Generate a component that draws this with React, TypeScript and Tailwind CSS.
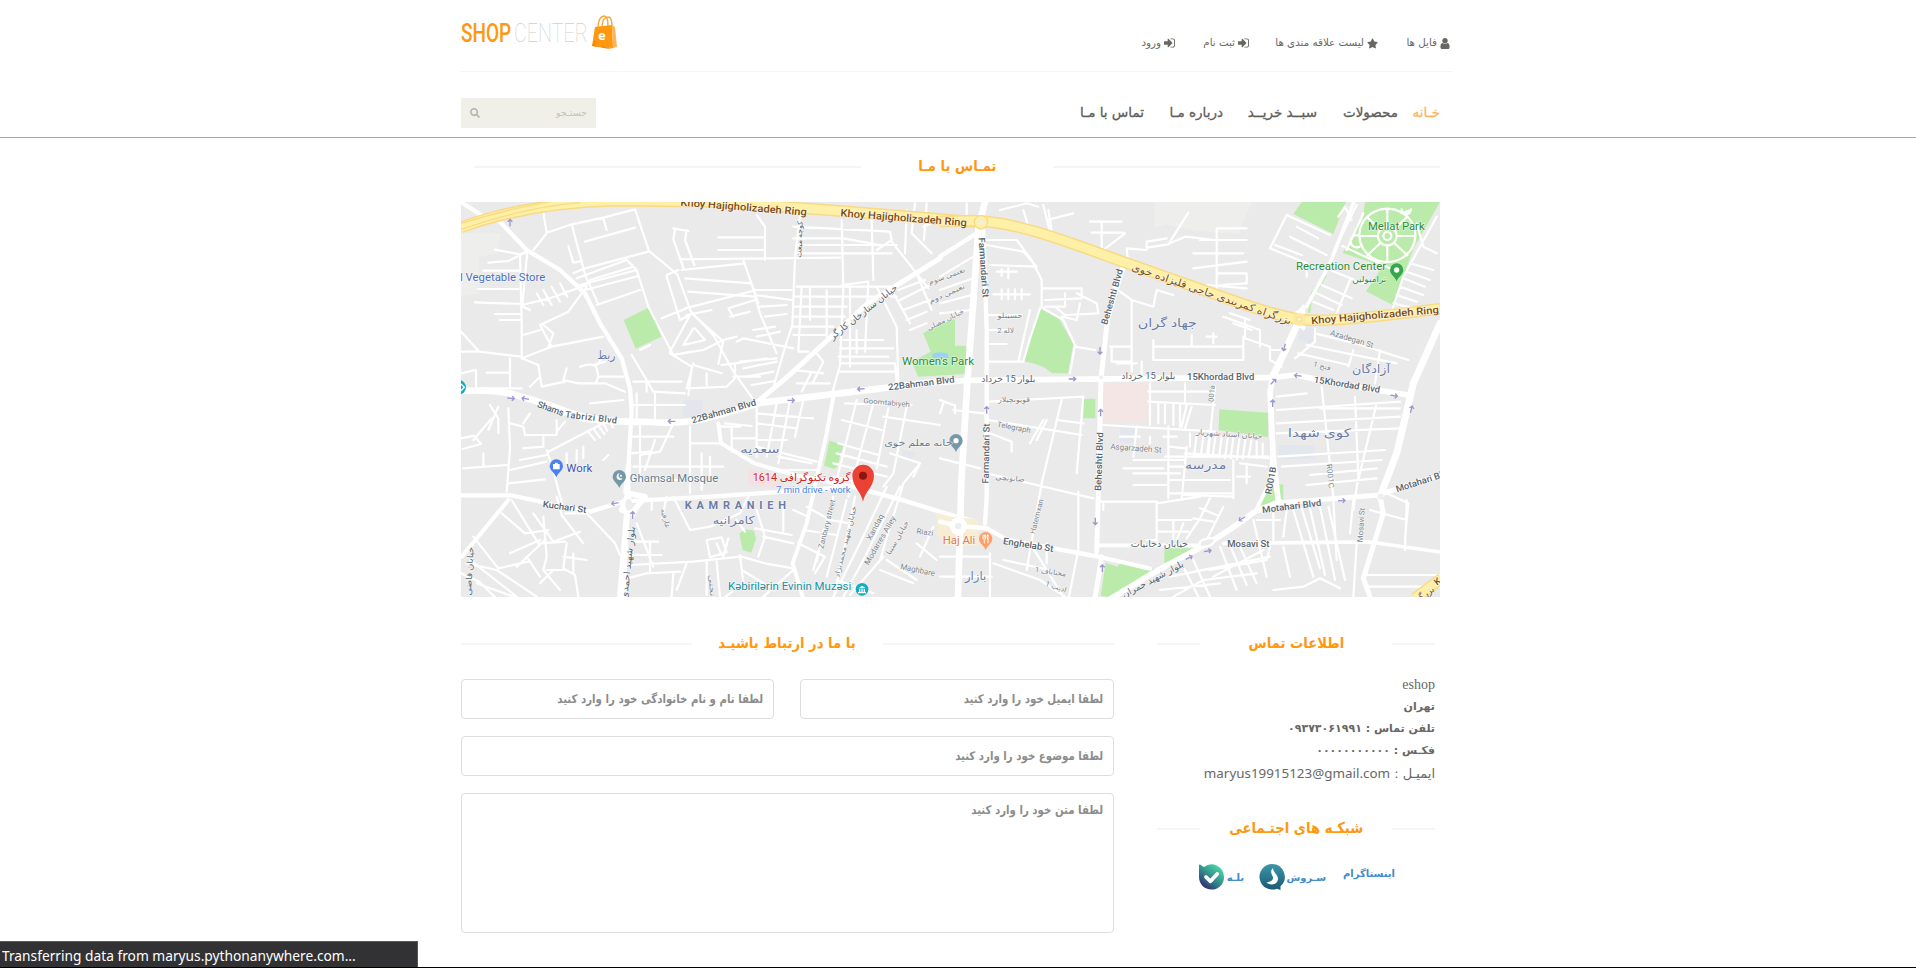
import type { ReactNode } from "react";
import { FaSearch, FaStar } from "react-icons/fa";

const UserIcon = () => (
  <svg viewBox="256 128 1280 1536" className="h-[11px] w-[10px] shrink-0" fill="currentColor">
    <path d="M1536 1399q0 109-62.5 187t-150.5 78H469q-88 0-150.5-78T256 1399q0-85 8.5-160.5t31.5-152 58.5-131 94-89T583 832q131 128 313 128t313-128q76 0 134.5 34.5t94 89 58.5 131 31.5 152 8.5 160.5zm-256-887q0 159-112.5 271.5T896 896 624.5 783.5 512 512t112.5-271.5T896 128t271.5 112.5T1280 512z" />
  </svg>
);

const SignInIcon = () => (
  <svg viewBox="128 256 1536 1280" className="h-[10px] w-[11px] shrink-0" fill="currentColor">
    <path d="M1312 896q0 26-19 45l-544 544q-19 19-45 19t-45-19-19-45v-288H192q-26 0-45-19t-19-45V704q0-26 19-45t45-19h448V352q0-26 19-45t45-19 45 19l544 544q19 19 19 45zm352-352v704q0 119-84.5 203.5T1376 1536h-320q-13 0-22.5-9.5T1024 1504q0-4-1-20t-.5-26.5 3-23.5 10-19.5 20.5-6.5h320q66 0 113-47t47-113V544q0-66-47-113t-113-47h-312l-11.5-1-11.5-3-8-5.5-7-9-2-13.5q0-4-1-20t-.5-26.5 3-23.5 10-19.5 20.5-6.5h320q119 0 203.5 84.5T1664 544z" />
  </svg>
);

const BagIcon = () => (
  <svg viewBox="0 0 26 34" className="h-[34px] w-[26px] shrink-0">
    <path d="M6 12C6 5 9 1 12 1s4 3 4 10M10 12c0-7 3-10 6-10s4 3 4 9" fill="none" stroke="#fba33c" strokeWidth="1.4" />
    <path d="M3 12 20 10l1 23L0 31z" fill="#fe980f" />
    <path d="M20 10l3 2 2 20-4 1z" fill="#fdb45e" />
    <path d="M0 31l3-7 1 7 18 2-6 .8z" fill="#f58a07" />
    <text x="10" y="25" textAnchor="middle" fontSize="12.500" fontWeight="700" fill="#fff" fontFamily="Open Sans, sans-serif">e</text>
  </svg>
);

const SoroushIcon = () => (
  <svg viewBox="0 0 26 26" className="h-[26px] w-[26px] shrink-0">
    <defs>
      <linearGradient id="soroush" x1="0" y1="0" x2="0" y2="1">
        <stop offset="0" stopColor="#3b97ab" />
        <stop offset="1" stopColor="#1b5873" />
      </linearGradient>
    </defs>
    <path d="M13 0a12.800 12.800 0 1 0 5 24.700L21.500 26v-3.700A12.800 12.800 0 0 0 13 0z" fill="url(#soroush)" />
    <path d="M14 4c-2 2-2.500 4-1 7 2 3.500 1.500 6-5.500 7.500 3 2.800 8.500 2.500 10.500-.5 2.200-3.500.5-6-1.500-8.500-1.300-1.700-2.200-3-2.500-5.500z" fill="#fff" />
  </svg>
);

const BaleIcon = () => (
  <svg viewBox="0 0 25 26" className="h-[26px] w-[25px] shrink-0">
    <defs>
      <linearGradient id="bale" x1="1" y1="0" x2="0.200" y2="1">
        <stop offset="0" stopColor="#4ff0b0" />
        <stop offset="0.500" stopColor="#36998f" />
        <stop offset="1" stopColor="#2f2370" />
      </linearGradient>
    </defs>
    <path d="M0 1.200C0 .5 1 .4 1.700.9L5 3A12.500 12.500 0 0 1 25 13a12.300 12.300 0 0 1-12.500 12.600C5.500 25.600 0 20 0 13z" fill="url(#bale)" />
    <path d="M7 13l4.500 4.300L18.200 10" fill="none" stroke="#fff" strokeWidth="3.800" strokeLinecap="round" strokeLinejoin="round" />
  </svg>
);

type Label = [text: string, x: number, y: number, size: number, length: number, angle?: number, color?: string, weight?: number];

const ROAD = "#56636d";
const AREA = "#6b7ba6";
const HWY = "#7b4a12";
const PARK = "#2b8a3a";

const westLabels: Label[] = [
  ["Khoy Hajigholizadeh Ring", 911, 62, 31, 380, 4.500, HWY, 500],
  ["Khoy Hajigholizadeh Ring", 1391, 94, 31, 380, 4.500, HWY, 500],
  ["l Vegetable Store", 188, 273, 30, 256, 0, "#4a6fc0"],
  ["ربط", 499, 507, 36, 54, 0, AREA],
  ["22Bahman Blvd", 851, 673, 27, 200, -16, ROAD, 500],
  ["22Bahman Blvd", 1444, 589, 27, 200, -7, ROAD, 500],
  ["Goomtabiyeh", 1340, 645, 22, 140, 5, "#7a838a"],
  ["خانه معلم خوی", 1435, 768, 26, 205, 0, "#5f7a8c"],
  ["سعدیه", 960, 790, 34, 118, 0, AREA],
  ["Work", 418, 846, 31, 78, 0, "#3f51b5"],
  ["Ghamsal Mosque", 702, 877, 30, 265, 0, "#5d7d8d"],
  ["گروه تکنوگرافی 1614", 1085, 873, 31, 294, 0, "#d0211c"],
  ["7 min drive - work", 1120, 909, 25, 224, 0, "#4582e8"],
  ["KAMRANIEH", 886, 956, 33, 304, 0, AREA, 700],
  ["کامرانیه", 881, 1003, 33, 126, 0, AREA],
  ["Kuchari St", 374, 960, 27, 132, 8, ROAD, 500],
  ["خیابان ستارخان کارگر", 1270, 375, 27, 250, -38, ROAD],
  ["کوچه مبعث", 1078, 156, 22, 110, -88, ROAD],
  ["Zanbury street", 1160, 1010, 23, 150, -76, "#7a838a"],
  ["خیابان شهید محمدنژاد", 1216, 1062, 22, 220, -76, "#7a838a"],
  ["Xandaq", 1305, 1019, 23, 85, -62, "#7a838a"],
  ["Modarres Alley", 1320, 1059, 23, 165, -60, "#7a838a"],
  ["خیابان سینا", 1372, 1050, 22, 115, -60, "#7a838a"],
  ["Riazi", 1455, 1034, 23, 50, 8, "#7a838a"],
  ["Maghbare", 1433, 1148, 24, 105, 12, "#7a838a"],
  ["Kəbirilərin Evinin Muzəsi", 1049, 1200, 30, 370, 0, "#2090a0"],
  ["بلوار شهید احمدی", 564, 1128, 27, 220, -84, ROAD],
  ["خیابان قاضی", 88, 1152, 25, 145, -87, ROAD],
  ["عارفیه", 677, 993, 22, 60, 76, "#7a838a"],
  ["تختی", 816, 1194, 22, 65, 86, "#7a838a"],
];

const eastLabels: Label[] = [
  ["Women's Park", -6, 525, 30, 216, 0, PARK],
  ["نعیمی سوم", 20, 265, 21, 115, -20, "#7a838a"],
  ["نعیمی دوم", 20, 318, 21, 115, -24, "#7a838a"],
  ["خیابان مصلی", 16, 396, 21, 120, -26, "#7a838a"],
  ["Farmandari St", 131, 242, 27, 180, 86, ROAD, 500],
  ["Farmandari St", 138, 800, 27, 180, -89, ROAD, 500],
  ["Beheshti Blvd", 516, 330, 27, 172, -74, ROAD, 500],
  ["Beheshti Blvd", 477, 824, 27, 176, -88, ROAD, 500],
  ["حسینلو", 210, 383, 22, 75, 0, "#7a838a"],
  ["لاله 2", 197, 429, 22, 50, 0, "#7a838a"],
  ["بلوار 15 خرداد", 205, 576, 26, 162, 0, ROAD],
  ["بلوار 15 خرداد", 625, 567, 26, 162, 0, ROAD],
  ["15Khordad Blvd", 842, 570, 27, 202, 0, ROAD, 500],
  ["15Khordad Blvd", 1221, 593, 27, 200, 9, ROAD, 500],
  ["قویونچیلار", 222, 637, 22, 96, 0, "#7a838a"],
  ["Telegraph", 222, 720, 23, 102, 11, "#7a838a"],
  ["صابونچی", 210, 872, 22, 88, 5, "#7a838a"],
  ["Hatemxan", 290, 987, 22, 107, -76, "#7a838a"],
  ["Enghelab St", 265, 1074, 28, 152, 9, ROAD, 500],
  ["Haj Ali", 57, 1063, 31, 98, 0, "#e07a4a"],
  ["بازار", 107, 1171, 36, 64, 0, AREA],
  ["محتاباف 1", 332, 1153, 22, 94, 8, "#7a838a"],
  ["ادیب 1", 348, 1198, 22, 66, 18, "#7a838a"],
  ["جهاد گران", 682, 410, 36, 178, 0, AREA],
  ["مدرسه", 797, 838, 35, 124, 0, AREA],
  ["کوی شهدا", 1138, 741, 36, 190, 0, AREA],
  ["آزادگان", 1293, 550, 35, 114, 0, AREA],
  ["Asgarzadeh St", 588, 783, 24, 154, 4, "#7a838a"],
  ["خیابان استاد شهریار", 868, 740, 22, 200, 4, "#7a838a"],
  ["001a", 815, 618, 22, 50, -85, "#7a838a"],
  ["فتح 1", 1146, 535, 21, 54, 14, "#7a838a"],
  ["Azadegan St", 1236, 455, 24, 134, 17, "#7a838a"],
  ["R001B", 992, 881, 27, 84, -80, ROAD, 500],
  ["R001C", 1171, 866, 23, 72, 84, "#7a838a"],
  ["Motahari Blvd", 1055, 958, 27, 178, -7, ROAD, 500],
  ["Motahari Bl", 1437, 885, 27, 145, -18, ROAD, 500],
  ["Mosavi St", 925, 1070, 27, 126, 0, ROAD, 500],
  ["Mosavi St", 1263, 1013, 23, 104, -86, "#7a838a"],
  ["خیابان دخانیات", 658, 1072, 26, 172, 0, ROAD],
  ["بلوار شهید جمران", 638, 1177, 27, 205, -28, ROAD],
  ["بزرگراه کمربندی حاجی قلیزاده خوی", 815, 322, 31, 505, 19, HWY],
  ["Khoy Hajigholizadeh Ring", 1305, 386, 30, 384, -5, HWY, 500],
  ["Mellat Park", 1369, 121, 31, 170, 0, PARK],
  ["Recreation Center", 1203, 241, 30, 270, 0, PARK],
  ["ترامبولین", 1288, 277, 25, 102, 0, PARK],
  ["بزرگ", 1455, 1222, 28, 60, -38, HWY],
  ["K", 1492, 1184, 28, 18, -38, HWY, 500],
];

const MapLabels = ({ items }: { items: Label[] }) => (
  <g fontFamily="Roboto, DejaVu Sans, sans-serif" textAnchor="middle" stroke="#fff" strokeOpacity="0.700" strokeWidth="3.500" strokeLinejoin="round" paintOrder="stroke">
    {items.map(([text, x, y, size, length, angle = 0, color = ROAD, weight = 400], i) => (
      <text key={i} x={x} y={y} fontSize={size} textLength={length} lengthAdjust={text === "KAMRANIEH" ? "spacing" : "spacingAndGlyphs"} transform={`rotate(${angle} ${x} ${y - size * 0.350})`} fill={color} fontWeight={weight}>
        {text}
      </text>
    ))}
  </g>
);

const Arrow = ({ x, y, r }: { x: number; y: number; r: number }) => (
  <path d="M-11 0H9M3-7l7 7-7 7" transform={`translate(${x} ${y}) rotate(${r})`} fill="none" stroke="#9a97cc" strokeWidth="4" />
);

const Pin = ({ x, y, color, children }: { x: number; y: number; color: string; children?: ReactNode }) => (
  <g transform={`translate(${x} ${y})`}>
    <path d="M0 32C-4 18-20 12-20-2a20 20 0 0 1 40 0C20 12 4 18 0 32z" fill={color} />
    {children ?? <circle cy="-2" r="8" fill="#fff" />}
  </g>
);

const WEST_HIGHWAY = "M63 112Q260 40 520 32L800 35Q1200 60 1625 98";
const EAST_HIGHWAY = "M0 94L100 92C220 97 330 135 520 205T860 325Q1000 375 1080 388T1500 356M1425 1225l80-60";

const CityMap = () => (
  <svg direction="ltr" viewBox="461 202 979 395" className="block h-[395px] w-[979px]">
    <rect x="461" y="202" width="979" height="395" fill="#eaeaea" />
    <g transform="translate(440 190) scale(0.333333)">
      <path d="M63 130l120 0-10 60-55 10 0 110-55 10z" fill="#eeeeec" />
      <path d="M551 390l77-38 36 88-77 36z" fill="#bbebab" />
      <path d="M1168 752l42 12-18 65-8 8-32-10z" fill="#bbebab" />
      <path d="M898 1030l20-12 24 4 6 24-14 42-26-8-6-28z" fill="#bbebab" />
      <path d="M1450 430l50-28 45-15v95h34v70l-145 8-18-45 56-30z" fill="#bbebab" />
      <path d="M1475 492q25-10 50 0v12h-44z" fill="#9bd0f7" />
      <path d="M730 630l60 0-6 50-56 6z" fill="#e3e7ed" />
      <path d="M925 835l50 10 60 25-8 25-102-8z" fill="#f4e2e2" />
      <path d="M1385 780l45 8-22 26-20-10z" fill="#e3e7ed" />
      <g fill="none" stroke="#fff" strokeWidth="6.500" strokeLinejoin="round" strokeLinecap="round">
        <path d="M310 68l10 60 75-25M395 103l95-20 95-25 42 125 85 70 40 110 70 75 60 110 65 90M395 103l40 150 40 90M435 155l150-42M490 85l10 35M385 168l15 50 25-5M320 130l-40 50M265 183l-25 10-75-14M265 183l-60 30-60 5M240 195l5 200v110M262 185l-15 160M400 250l35-15 190-50M410 265l150-55M420 285l170-45M590 240l-35-35M590 240l35 110 75 145 55-10M450 270l130-40M470 345l130-45M435 300l160-42M130 242h110M115 297h120M105 337l140 5M165 372h80M180 390h65M245 345l85-20 110-40M270 360l-20-10M310 300l25 45M335 290l25 45M360 280l22 40M290 310l20 35M440 290l-55 75-85 40 35 65M250 435l50-15M310 405l30 25-15 40M245 505l90-35 155-30M245 505l50 20 10 65M63 425l55 60M63 485h55l125 15M63 550l45-10v50M140 548h65M210 505v90M110 595h135M305 590l70-15M270 590l30-30M380 535l-10 35 45 10 80 0 60 25M420 530q40-15 50 5l5 25-8 20M475 560h75M470 525l25-30M460 525l35-10M450 640l100-10M150 645l25 40v45M175 650l-30 70M205 655l5 120-10 130M100 750l55-65M63 745l40-8 20 25-55 15M210 700l40 10 5 25h55v35l-60 5M350 690v45h-60M250 700l20-30M375 695l-25 30M320 780l15 45 35 130M325 785l165-85M445 725l20 25M460 715l20 28M475 707l18 25M490 700l12 22M505 690l14 22M210 840l110-25M205 880l110-12M70 835l130-10M130 790v40M380 790v35M410 780v35M430 770v35M490 810l15-15M240 810l80-15" />
        <path d="M600 480l30-15M575 495l45 75 20 35 95 5M580 575h145M620 575v30M645 605v80M590 610v75M580 645h155M740 595l20-75M755 535l-10 80M760 525l85 25M690 490l65 40M700 495l90-15 60-30 40-10M850 452l-15 70M845 525l40-5 95-15M885 520l0 45-25 25-115 5M880 560h80M800 550v35M765 415l30 35-65 15 30-50M750 375l-60 110M755 370l90 80M745 305l200 15M735 355l215-55M740 375l75-15M880 380l-15-25 80-25M870 380l60-15M945 320l15 50 50 120M665 385l75-30M700 115l45 8M705 118l-5 30 30 85M740 120l-5 30 28 75M680 255l35-15M680 260l40 130 30-15M735 265l200 15M725 240l190-20M910 210l45 130M945 300h110M945 315l110 15M890 455l20-10 150 30M900 515l110-10M910 535l100-20M920 560l80-15M935 585l70-12M940 420l65-10M950 440l70-15M975 380l65-8M960 350l80-5" />
        <path d="M835 142h140M835 180h140M720 208l480-5M950 75l25 35v100M1080 75l-15 130-8 200-20 60-35 120M1060 110l290 15M1060 145h150l110 20M1070 165h300M1065 190h290M1295 90l5 180M1205 90l5 205-10 230-25 90M1350 125l5 25-45 30M1355 155l110 140M1205 285l80-10-10 210M1070 290h300M1060 320h310M1060 350h160M1060 380h155M1060 410h120M1060 435h100M1085 290l-10 195h30M1110 290v100M1160 300v140M1230 290v240M1250 420v70M1200 450l130 0M1200 475h160M1195 500h150M1200 520h165l5 55M1200 545h170M1310 290l60 120 5 165M1350 290l60 110M1375 300l80-30M1380 330l90-45M1390 360l80-30M1400 390l60-25M1410 420l50-20M1430 250l45 110M1400 60l-5 130M1425 40l-10 90 60 60M1450 110l50-20M1460 40l-8 110M1130 490l20 25-30 60M1060 540l90 10M1115 545l-30 60M1070 580h100M1090 630l-25 110M1050 630l-35 190M1010 640l-30 160M950 650v150M950 670l170 15M950 700l120 15M950 750h90M950 770l180 45M840 710h60M880 745h65M875 710v75M785 790v110M810 800v55M750 710v200M570 740h130M570 790l60-5M580 830h270M700 700l-40 85-60 10M645 750l-30 90M855 700l80 8M570 870h150M600 700l0 160M750 760l100 0M1015 800l100 20M1010 840l120 0" />
        <path d="M1205 690l120 30M1195 760l120 35M1190 790l150 40M1180 820l160 40M1180 860l110 25M1250 630l-65 260M1300 640l-75 280M1215 640l200 5M1330 680l170 25M1350 790l90 30-20 40M1345 655l-35 180M1400 650l-40 200-30 40M1440 820l-50 60-70 230M1100 950l70 40 60 10M1090 1020l100 15M1075 1060l80 40-30 50M1150 1020l-20 95M1180 920l-60 220M1220 930l-60 230M1245 920l-60 290M1340 890l-80 170-80 160M1380 890l-110 220-60 110M1340 1110l90 60M1320 1140l100 40M1330 1100l-100 115M1430 1060l60 50M1480 1010l-40 90M1190 1170l110 40M610 920l-30 60M635 925v35M680 920l-15 70M700 920l50 100 60-10 90-40 25-50M750 1020l30-5M800 1050l45-8 15 45-50 15zM830 1060l15 35M865 1045l-15 55M580 1055h75M575 1095h90M570 1125l190-10 140-15M560 1165l60-15 100-5M630 1060v90M590 1000l50 130M900 1095l10 85-60 45M905 1100l70 20 85 15M800 1115v100M830 1115l10 105M740 1120l-30 80M700 1150l-5 70M905 1140l100 60M1060 1140l-90 80M950 960l25 80-20 60M890 990l25 35M945 1015l110 20M970 1040l90 20M280 970l60 85 80-30M375 970l65 0 85 90 15 35M350 920l15 55 65 85M215 930l80 130 80-5M185 970l70 60 70-10M100 1040l75 95 90-20M80 1120l90 20 120 80M90 1110l140 110M110 1180l110 40M63 1150l55 25 50 50M310 980l10 120-10 40 50 60M380 1060l-10 75 35 20 10 65M370 1100l70 10M400 1090v60M320 1140l60 0M300 1180l40-40M210 1090l90-40M230 1130l85-80M260 1100l40 60M1030 950v75M1060 960l45 20" />
      </g>
      <g fill="none" stroke="#fff" strokeLinejoin="round" strokeLinecap="round">
        <path strokeWidth="13" d="M63 36l85 55M180 95l80 85 100 60 75 70 45 90 65 105 25 90 5 65-8 140-5 180-15 300" />
        <path strokeWidth="18" d="M565 920l-25 300" />
        <path strokeWidth="20" d="M63 603q90-5 150 8 130 35 220 75 90 10 200 10 110 8 200-20 80-22 130-38 250-30 537-64" />
        <path strokeWidth="15" d="M953 635l90-75 120-110 120-110 217-135" />
        <path strokeWidth="12" d="M1180 620l-20 110-60 270-42 120 30 100" />
        <path strokeWidth="13" d="M63 916h150q80 15 160 38l80 10 100-30 270-15 300-20 110-10 150 40 130 40 90 25" />
        <path strokeWidth="12" d="M835 700l8 60 100 60 120 35 180 35M205 930l-140 170" />
        <path strokeWidth="17" d="M558 905l8-80M545 960l20-50 50 10-40 50z" />
      </g>
      <ellipse cx="566" cy="944" rx="10" ry="18" fill="#ededed" />
      <path d={WEST_HIGHWAY} fill="none" stroke="#f9da84" strokeWidth="35" />
      <path d={WEST_HIGHWAY} fill="none" stroke="#fff0a8" strokeWidth="26" />
      <path d="M63 100Q260 40 420 22M63 118Q260 50 420 38" fill="none" stroke="#f9da84" strokeWidth="4" />
      <Arrow x={210} y={98} r={-90} /><Arrow x={213} y={625} r={5} /><Arrow x={256} y={626} r={190} /><Arrow x={695} y={694} r={180} /><Arrow x={1053} y={631} r={0} /><Arrow x={1263} y={597} r={175} /><Arrow x={525} y={940} r={170} /><Arrow x={578} y={975} r={-90} />
      <path d="M300 640q110 45 230 55" fill="none" stroke="#fff" strokeWidth="22" />
      <text fontFamily="Roboto, sans-serif" fontSize="27" fontWeight="500" fill={ROAD} transform="translate(290 650) rotate(20)" textLength="82">Shams</text>
      <text fontFamily="Roboto, sans-serif" fontSize="27" fontWeight="500" fill={ROAD} transform="translate(375 682) rotate(7)" textLength="156">Tabrizi Blvd</text>
      <circle cx="56" cy="592" r="22" fill="#12aec0" />
      <path d="M63 582l10 10-10 10" stroke="#fff" strokeWidth="4" fill="none" />
      <Pin x={349} y={830} color="#4a80f5"><path d="M-10-8h20v16h-20zM-4-12h8v4h-8z" fill="#fff" /></Pin>
      <Pin x={538} y={862} color="#7598a8"><path d="M2-12a10 10 0 1 0 9 14 8 8 0 1 1-9-14z" fill="#fff" /><circle cx="5" cy="-5" r="3" fill="#fff" /></Pin>
      <circle cx="1266" cy="1198" r="19" fill="#12aec0" />
      <path d="M1255 1195l11-8 11 8zM1257 1197h4v9h-4zM1264 1197h4v9h-4zM1271 1197h4v9h-4zM1254 1206h24v4h-24z" fill="#fff" />
    </g>
    <g transform="translate(940 190) scale(0.333333)">
      <path d="M645 36h290l-40 95-125-8-90-20-38 10z" fill="#eeeeec" />
      <path d="M1085 36h133l-38 96-120-60zM1275 36h225l-80 140-60 170-82-42 50-75-120-40 60-100z" fill="#bbebab" />
      <path d="M1160 258l-45 75-4 35h-8l10-60 42-55zM1180 375l150-15-15 20z" fill="#bbebab" />
      <path d="M298 355l60 32 42 75-16 88h-48q-30-28-86-36l20-80z" fill="#bbebab" />
      <path d="M430 626h36v59h-36zM838 658l146 10v74l-148-22zM1018 882l12 2v60l-40-2-36 4 20-45z" fill="#bbebab" />
      <path d="M673 1075h95l-60 45-35-2zM497 1118l35 12 10-12 110 22-140 82-30-4z" fill="#bbebab" />
      <path d="M-50 430l50-28h45v65h34v85h-145l-10-40 56-30z" fill="#bbebab" />
      <path d="M-25 492q25-10 50 0v12h-44z" fill="#9bd0f7" />
      <path d="M493 578h132v118h-136z" fill="#f5e6e6" />
      <path d="M1075 410l48 6-6 50-42-18zM1015 765h110v42h-110zM540 710h45v50h-45z" fill="#e3e7ed" />
      <path d="M-10 970l40 10 85 8v80H20l-30-35z" fill="#f6edd2" />
      <g fill="none" stroke="#fff" strokeWidth="6.500" strokeLinejoin="round" strokeLinecap="round">
        <path d="M450 95h95M455 128h95M485 95v80M490 180l65-50M565 225l-5-50 60 5M620 155l60-10M620 155v18l65-10 60-95M690 160l45-20 90 10M835 115h85M830 115v190M780 150h140M760 190h150M760 235l160-20M835 250h85v30l-80 5M800 285l120 10M325 60l10 60M250 60l15 50M180 60l80-20 35 10M310 45l20 80M320 90l80-20M80 40v50M140 150l90 0 45 60 30 60v80M140 165l110 20 40 45M150 225l140 5M0 260l100-60M0 300l100-35M0 340l95-25M0 370l95-10M170 245h60M205 235v30M185 238v20M160 313h110M185 298v30M205 298v30M225 298v30M245 298v30M305 295h120v30l-110 5M345 350l30 25 100-5-5-30-60-30M315 350h60v-40M420 340l-10 50-45-10M140 375h105M145 420h75M140 462h60M270 360l-35 155M300 355l-30 90-20 70M310 355l60 35 35 75-15 85M405 470l60 10M145 515h100M520 290l55 40 65 20 10-50 50 15M575 335v210M510 470h60M515 470v45h60M640 450v60h270v-70M640 470h270M755 435v30M820 430v30M800 440h30M605 515v40M915 390v55l75 25v40M850 380l110 40v50M870 370l60 20M880 400l55 20M990 480h30M990 510l35 20M1125 415v40l-60 50M1075 490l150 35M1100 465l120 25 150 30M1125 430l120 30 160 50M1240 480l-15 50M1320 480l-15 100" />
        <path d="M1040 75l130 60M1040 75l-50 100 110 45v40M1070 110l65 35M1050 140l110 55M1005 165l80 30M1170 240l100 40M1145 285l90 40M1130 310l75 35M1120 335l60 25M1230 270l-40 100M1250 45l-60 120M1490 80l-100 180-40 120M1410 220l70 20M1400 245l70 25M1390 265l65 25M1380 290l70 25M1370 315l60 20M1360 340l60 15M1430 100l20 70 40 20M1215 50l20 40M1195 80l20-30" />
        <path d="M1270 70l-50 110M1207 168l160 75M1342 56a84 80 0 1 0 .1 0M1342 110a28 28 0 1 0 .1 0M1342 56v54M1342 168v48M1258 138h54M1370 138h56M1282 82l40 38M1362 158l40 38M1400 82l-38 38M1322 158l-40 38M1258 138a18 18 0 1 0 0 32M1385 58a14 14 0 1 0 28 0M1385 70l28-10" />
        <circle cx="1342" cy="138" r="12" />
        <path d="M0 630l40 15M40 660l90 10M10 640l-10 30M45 645v25M145 635l285-15-20 230M145 690l280 45M365 630l-60 250-45 260M350 690l80 10M310 690l-40 70M320 690l-30 60M150 730l65 25v30M140 850l320 75M415 905v180M0 805l120 30M480 935h170v120M650 940l130-20M630 580v125M735 580v55M625 605h200M625 635l200 10M655 640v60M675 640v60M700 640v65M720 640v70M740 645l-15 65M755 650l-20 65M490 705l340 20M685 710v215M740 770l-15 160M590 710l-10 90M670 740h40M540 740h60M630 740v20M675 800l310 0M580 810h150M580 850h140M580 885h100M690 770l45 5M550 835h120M690 830h60M690 870h180M690 910h190M735 790l265 15M750 770v-40M770 735l-8 65M790 740l-8 60M808 740l-8 60M826 740l-8 60M845 742l-8 60M863 745l-8 60M880 745l-8 60M898 748l-8 60M916 750l-8 55M934 752l-8 50M950 755v50M968 760v40M825 590l-20 200M880 810v115M900 820l80 10M920 820v60M890 860h40M730 915l145 5M810 925l-30 60-40 60M850 950l-50 100M780 955l50 20M760 985l60 10M655 990h100M655 1025h90M700 990v60M650 1050h-30M730 1000l-20 50M1010 660l370-25M1010 700l370-20M1010 730l370-15M1015 800l320-20M1025 830l300-20M1110 855l200-20M1100 885l210-20M1145 590l35 330M1245 620l10 240-15 100M1100 610l-90 10M1140 655h240M1310 640l-60 250M1240 930l-10 100M1180 930l10 180M1400 930l-5 150M1340 910l65 30-10 110M940 990l40 170M1000 970v80M1060 960l60 200M1085 955l55 180M1110 955l45 200M1140 950l45 220M1165 950l50 220M1040 960l-10 80M950 990h70M990 1070l-10 40-170 30M1030 1070l20 90M970 1080l-150 80M840 1070l50 130M870 1065l50 120M900 1070l50 110M760 1110l50 110M730 1130l45 90M690 1160l300-60M660 1200l180-20M700 1220l90-50 160-20M1000 1200l90-10 50-25 60 30M1280 1155h220M1280 1190h220M1250 1060l-10 160M150 1090v130M0 1100h150M0 1160h155M270 1060l100 160M190 1110l140 30M160 1120l140 50 90 60M415 1080l-30 150M320 1060v60M490 960v-20M590 520h-60M1290 960l110 30" />
      </g>
      <g fill="none" stroke="#fff" strokeLinejoin="round" strokeLinecap="round">
        <path strokeWidth="20" d="M135 36l-20 80-15 220-18 240-18 300-10 345" />
        <path strokeWidth="13" d="M130 120l10 300v500l-5 80M0 200l110-70" />
        <path strokeWidth="17" d="M0 578l80-7 800-8 110 0 75-8 150 30 190 30" />
        <path strokeWidth="15" d="M548 235l-45 150-20 180-8 350-5 170M485 1100l-20 125" />
        <path strokeWidth="11" d="M1240 40l-70 180-70 130" />
        <path strokeWidth="21" d="M1080 385l-50 110-30 60M1500 400l-80 180-50 210-50 130" />
        <path strokeWidth="17" d="M1000 555l-10 50 10 200 15 130M1020 935l-75 30-70 50-70 45-150 80-150 90" />
        <path strokeWidth="11" d="M998 790l-10 90-40 80" />
        <path strokeWidth="15" d="M1020 938l290-22 190-60M1320 920l10 50-60 195 20 55" />
        <path strokeWidth="11" d="M480 1066h300M850 1060l440-4 210 30" />
        <path strokeWidth="13" d="M0 995l60 14 80 5 60 35 280 52 150 35" />
      </g>
      <circle cx="55" cy="1008" r="26" fill="#fff" /><circle cx="55" cy="1008" r="10" fill="#eee" />
      <path d="M780 1070q-8-18 20-24 28-5 24 8-14 20-44 16z" fill="#ececec" stroke="#fff" strokeWidth="7" />
      <circle cx="1322" cy="920" r="9" fill="#eee" />
      <circle cx="483" cy="562" r="6" fill="#eee" />
      <path d="M1090 350q-8 20-40 25l40 40z" fill="#fff" stroke="#fff" strokeWidth="12" strokeLinejoin="round" />
      <path d={EAST_HIGHWAY} fill="none" stroke="#f9da84" strokeWidth="35" />
      <path d={EAST_HIGHWAY} fill="none" stroke="#fff0a8" strokeWidth="26" />
      <circle cx="123" cy="97" r="20" fill="#fff0a8" stroke="#f9da84" strokeWidth="4" /><circle cx="123" cy="97" r="7" fill="#eee" />
      <circle cx="1078" cy="388" r="20" fill="#ffe9a0" /><circle cx="1078" cy="388" r="7" fill="#f7efd2" stroke="#f9da84" strokeWidth="3" />
      <Arrow x={397} y={567} r={0} /><Arrow x={480} y={482} r={90} /><Arrow x={482} y={668} r={-90} /><Arrow x={466} y={994} r={90} /><Arrow x={487} y={1135} r={-90} /><Arrow x={140} y={660} r={-90} /><Arrow x={1033} y={472} r={105} /><Arrow x={1074} y={557} r={186} /><Arrow x={1000} y={575} r={-45} /><Arrow x={998} y={640} r={-90} /><Arrow x={1362} y={617} r={8} /><Arrow x={1414} y={658} r={-75} /><Arrow x={1205} y={932} r={-4} /><Arrow x={906} y={986} r={148} /><Arrow x={803} y={1083} r={-10} /><Arrow x={747} y={1103} r={-28} />
      <Pin x={48} y={754} color="#7598a8" />
      <Pin x={1370} y={242} color="#35a84c" />
      <Pin x={137} y={1048} color="#ff9e67"><path d="M-8-14v10q0 4 4 4v12M-4-14v10M0-14v10q0 4-4 4M7-14v26M7-14q-5 6-1 14" stroke="#fff" strokeWidth="3" fill="none" /></Pin>
    </g>
    <g transform="translate(440 190) scale(0.333333)"><MapLabels items={westLabels} />
      <path d="M1269 935C1264 905 1237 890 1237 857a32.500 32.500 0 0 1 65 0C1302 890 1274 905 1269 935z" fill="#ea4335" />
      <circle cx="1269" cy="857" r="12" fill="#8c1610" />
    </g>
    <g transform="translate(940 190) scale(0.333333)"><MapLabels items={eastLabels} /></g>
  </svg>
);

const TopLink = ({ icon, children, className }: { icon: ReactNode; children: ReactNode; className: string }) => (
  <a className={`flex items-center gap-[3px] whitespace-nowrap ${className}`}>
    {icon}
    <span>{children}</span>
  </a>
);

const Heading = ({ children, className, line }: { children: ReactNode; className: string; line: string }) => (
  <div className={`flex h-[24px] items-center justify-between ${className}`}>
    <i className={`mt-[2px] h-[2px] bg-[#f5f5f5] ${line}`} />
    <h2 className="flex scale-x-[0.880] justify-center text-[15px] font-bold whitespace-nowrap text-[#fe980f]">{children}</h2>
    <i className={`mt-[2px] h-[2px] bg-[#f5f5f5] ${line}`} />
  </div>
);

const Field = ({ children, className }: { children: ReactNode; className: string }) => (
  <div className={`flex rounded-[4px] border border-[#ddd] px-[10px] font-bold whitespace-nowrap ${className}`}>
    <span className="inline-block origin-right scale-x-[0.850]">{children}</span>
  </div>
);

export default function App() {
  return (
    <div dir="rtl" className="flex h-[968px] w-[1916px] flex-col overflow-hidden border-b border-black bg-white font-['DejaVu_Sans',sans-serif] text-[#696763]">
      <header className="h-[138px] shrink-0 border-b border-[#fe980f]">
        <div className="mr-[463px] flex h-[72px] w-[992px] justify-between border-b border-[#f5f5f5]">
          <nav className="mt-[34px] mr-[3px] flex h-[18px] items-center text-[10.300px]">
            <TopLink className="w-[72px]" icon={<UserIcon />}>فایل ها</TopLink>
            <TopLink className="w-[129px]" icon={<FaStar className="size-[11px] shrink-0" />}>لیست علاقه مندی ها</TopLink>
            <TopLink className="w-[74px]" icon={<SignInIcon />}>ثبت نام</TopLink>
            <TopLink className="w-[50px]" icon={<SignInIcon />}>ورود</TopLink>
          </nav>
          <div dir="ltr" className="mt-[15px] flex h-[35px] w-[157px] font-['Roboto',sans-serif] text-[26px] leading-[37px]">
            <span className="w-[53px] shrink-0"><span className="inline-block origin-left scale-x-[0.730] font-medium text-[#fe980f]">SHOP</span></span>
            <span className="w-[78px] shrink-0"><span className="inline-block origin-left scale-x-[0.760] font-thin text-[#cfcfcf]">CENTER</span></span>
            <BagIcon />
          </div>
        </div>
        <div className="mr-[476px] flex w-[979px] justify-between">
          <nav className="mt-[28px] flex h-[24px] items-center text-[13.500px] whitespace-nowrap text-[#5f5d59] [-webkit-text-stroke:0.300px_currentColor]">
            <a className="w-[42px] text-[#fdb45e]">خـانه</a>
            <a className="w-[81px]">محصولات</a>
            <a className="w-[94px]">سبــد خریــد</a>
            <a className="w-[79px]">درباره مـا</a>
            <a>تماس با مـا</a>
          </nav>
          <div className="mt-[26px] flex h-[30px] w-[135px] items-center justify-between bg-[#f0f0e9] px-[9px] text-[9.500px] text-[#c3c3bd]">
            <span>جستـجو</span>
            <FaSearch className="size-[10px] text-[#b2b2b2]" />
          </div>
        </div>
      </header>

      <main className="mr-[476px] flex w-[979px] flex-col">
        <Heading className="mt-[16px] w-[966px]" line="w-[387px]">تمـاس با مـا</Heading>
        <div className="mt-[24px]"><CityMap /></div>
        <div className="mt-[34px] flex justify-between">
          <aside className="mr-[5px] w-[278px]">
            <Heading className="" line="w-[43px]">اطلاعات تماس</Heading>
            <address className="mt-[19px] flex flex-col text-[11px] leading-[22px] whitespace-nowrap not-italic">
              <span className="font-['Liberation_Serif',serif] text-[14px]">eshop</span>
              <span className="font-bold">تهران</span>
              <span className="font-bold">تلفن تماس : <span className="tracking-[1px]">۰۹۳۷۳۰۶۱۹۹۱</span></span>
              <span className="font-bold">فکـس : <span className="tracking-[1.200px]">۰۰۰۰۰۰۰۰۰۰۰</span></span>
              <span className="text-[13px]">
                ایمیـل : <bdi className="font-['Noto_Sans',sans-serif] text-[13.400px]">maryus19915123@gmail.com</bdi>
              </span>
            </address>
            <Heading className="mt-[31px]" line="w-[43px]">شبکـه های اجتـماعی</Heading>
            <div className="mt-[24px] mr-[40px] flex h-[26px] items-center text-[10px] font-bold whitespace-nowrap text-[#428bca]">
              <a className="w-[69px] pb-[8px]">اینستاگرام</a>
              <a className="flex w-[82px] items-center gap-[2px]">سـروش<SoroushIcon /></a>
              <a className="flex items-center gap-[3px]">بلـه<BaleIcon /></a>
            </div>
          </aside>
          <section className="w-[653px]">
            <Heading className="" line="w-[231px]">با ما در ارتباط باشیـد</Heading>
            <form className="mt-[24px] grid grid-cols-[314px_313px] justify-between gap-y-[17px] text-[12px] text-[#8c8c8c]">
              <Field className="h-[40px] items-center">لطفا ایمیل خود را وارد کنید</Field>
              <Field className="h-[40px] items-center">لطفا نام و نام خانوادگی خود را وارد کنید</Field>
              <Field className="col-span-2 h-[40px] items-center">لطفا موضوع خود را وارد کنید</Field>
              <Field className="col-span-2 h-[140px] items-start pt-[7px]">لطفا متن خود را وارد کنید</Field>
            </form>
          </section>
        </div>
      </main>

      <div dir="ltr" className="absolute top-[941px] left-0 h-[26px] w-[418px] border-t border-r border-[#5a5a5c] bg-[#323234] pl-[2px] font-['Noto_Sans','Open_Sans',sans-serif] text-[14.500px] leading-[27px] whitespace-nowrap text-white">
        <span className="inline-block origin-left scale-x-[0.948]">Transferring data from maryus.pythonanywhere.com...</span>
      </div>
    </div>
  );
}
